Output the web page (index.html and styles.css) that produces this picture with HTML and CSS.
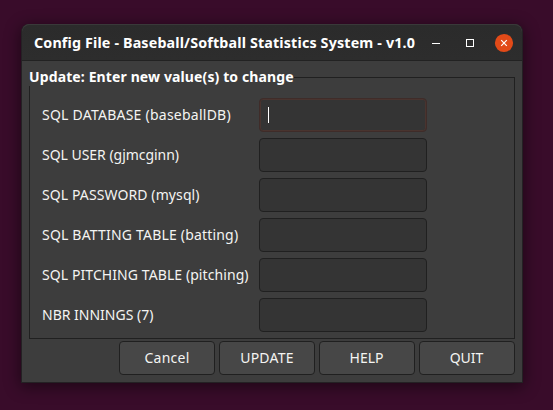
FILE: index.html
```html
<!DOCTYPE html>
<html lang="en">
<head>
<meta charset="utf-8">
<title>Config File</title>
<link rel="stylesheet" href="styles.css">
</head>
<body>
<main class="window">
  <header class="titlebar">
    <h1 class="title">Config File - Baseball/Softball Statistics System - v1.0</h1>
    <div class="controls">
      <svg class="control" viewBox="0 0 18 18"><path d="M5 9.5h8" stroke="#fff" fill="none"/></svg>
      <svg class="control" viewBox="0 0 18 18"><rect x="5.5" y="5.5" width="7" height="7" stroke="#fff" fill="none"/></svg>
      <svg class="control" viewBox="0 0 18 18"><circle cx="9" cy="9" r="9.1" fill="#e24a18"/><path d="M6.2 6.2l5.6 5.6M11.8 6.2l-5.6 5.6" stroke="#fff" stroke-width="1.2"/></svg>
    </div>
  </header>
  <form class="content">
    <section class="group">
      <div class="heading"><h2 class="legend">Update: Enter new value(s) to change</h2><i class="rule"></i></div>
      <div class="fields">
        <div class="row"><label class="database">SQL DATABASE (baseballDB)</label><div class="entry focused"><i class="caret"></i></div></div>
        <div class="row"><label class="user">SQL USER (gjmcginn)</label><div class="entry"></div></div>
        <div class="row"><label class="password">SQL PASSWORD (mysql)</label><div class="entry"></div></div>
        <div class="row"><label class="batting">SQL BATTING TABLE (batting)</label><div class="entry"></div></div>
        <div class="row"><label class="pitching">SQL PITCHING TABLE (pitching)</label><div class="entry"></div></div>
        <div class="row"><label class="innings">NBR INNINGS (7)</label><div class="entry"></div></div>
      </div>
    </section>
    <div class="actions">
      <button type="button" class="cancel">Cancel</button>
      <button type="button" class="update">UPDATE</button>
      <button type="button" class="help">HELP</button>
      <button type="button" class="quit">QUIT</button>
    </div>
  </form>
</main>
</body>
</html>
```
FILE: styles.css
```css
* { box-sizing: border-box; }
body {
  margin: 0;
  height: 410px;
  padding: 24px 0 0 21px;
  overflow: hidden;
  background: #390c2a;
  color: #f4f4f2;
  font: 14px/20px "Noto Sans", sans-serif;
}
.window {
  width: 502px;
  height: 359px;
  border: 1px solid #242124;
  border-top: 0;
  border-radius: 8px 8px 0 0;
  background: #3d3d3d;
  box-shadow: 0 3px 16px 1px rgba(0, 0, 0, .48);
}
.titlebar {
  display: flex;
  align-items: center;
  justify-content: space-between;
  height: 37px;
  padding: 0 9px 0 12px;
  border-top: 1px solid #393939;
  border-bottom: 1px solid #222;
  border-radius: 8px 8px 0 0;
  background: linear-gradient(#2b2b2b, #2d2d2d);
}
.title, .legend {
  margin: 0;
  font-size: 14px;
  line-height: 20px;
  font-weight: 700;
  white-space: nowrap;
  color: #fff;
}
.title { font-size: 14.3px; letter-spacing: .15px; }
.legend {
  position: relative;
  height: 18px;
  line-height: 18px;
  letter-spacing: .12px;
  background: #3d3d3d;
}
.controls { display: flex; gap: 16px; }
.control { display: block; width: 18px; height: 18px; overflow: visible; }
.content { padding: 6px 7px 0; }
.group { height: 272px; }
.heading { display: flex; align-items: center; height: 20px; }
.rule { flex: 1; height: 1px; background: #202020; }
.fields {
  display: grid;
  gap: 6px;
  height: 262px;
  margin-top: -10px;
  padding: 21px 12px 0;
  border: 1px solid #202020;
  border-top: 0;
  align-content: start;
}
.row { display: grid; grid-template-columns: 217px 168px; align-items: center; height: 34px; }
label { white-space: nowrap; }
.database { letter-spacing: .24px; }
.user { letter-spacing: -.03px; }
.password { letter-spacing: .1px; }
.batting { letter-spacing: .19px; }
.pitching { letter-spacing: .08px; }
.entry {
  display: flex;
  align-items: center;
  height: 34px;
  padding-left: 8px;
  border: 1px solid #202020;
  border-radius: 4px;
  background: #343434;
}
.focused { border-color: #3f2c29; box-shadow: inset 0 0 0 1px #49342f; }
.caret { width: 1px; height: 16px; background: #fff; }
.actions { display: grid; grid-template-columns: repeat(4, 96px); gap: 4px; justify-content: end; margin-top: 2px; }
button {
  height: 34px;
  padding: 0;
  border: 1px solid #202020;
  border-radius: 4px;
  background: #474747;
  color: inherit;
  font: inherit;
}
.cancel, .update { letter-spacing: .25px; }
.help, .quit { padding-right: 1px; }
```
